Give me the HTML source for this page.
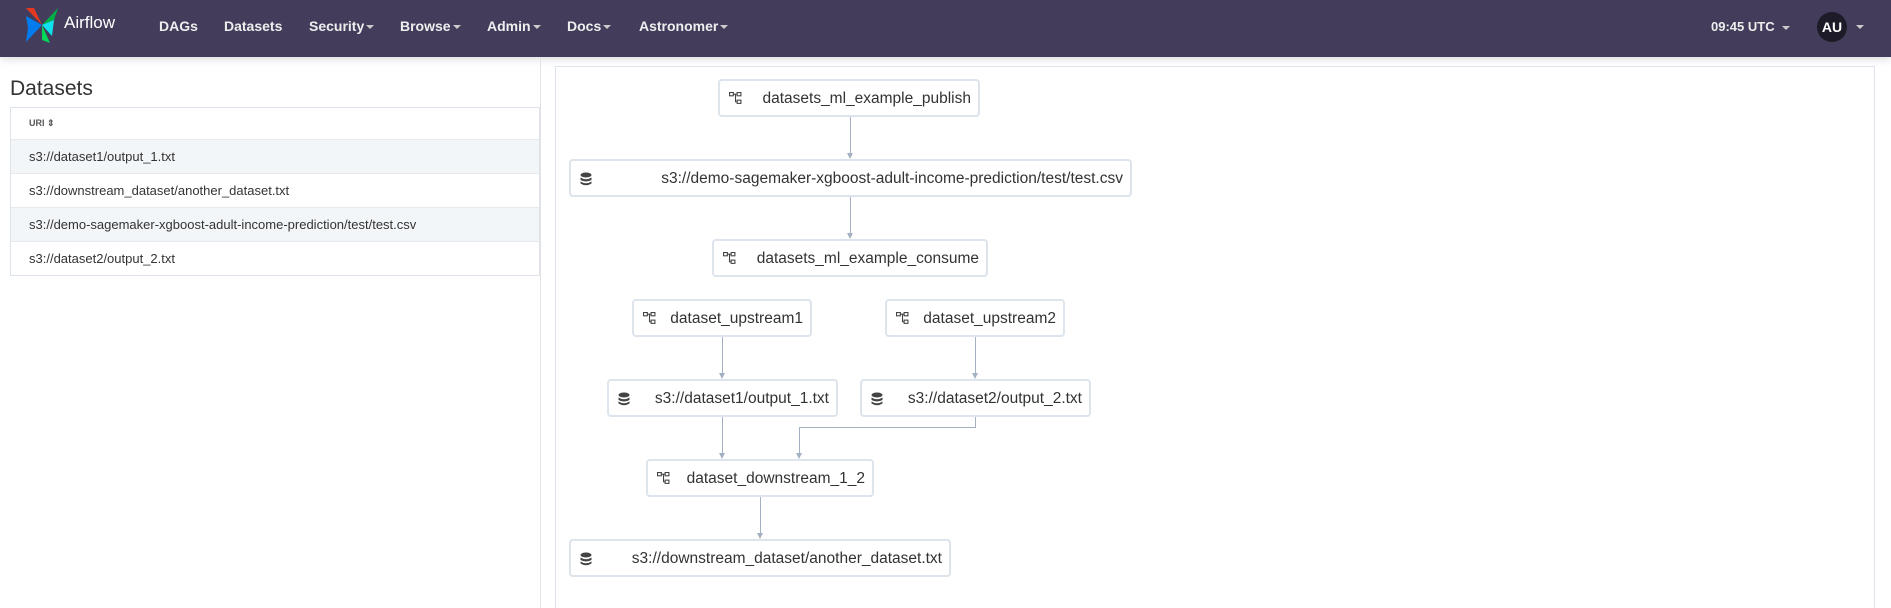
<!DOCTYPE html>
<html style="width:1891px;height:608px;overflow:hidden"><head><meta charset="utf-8"><style>
*{box-sizing:border-box;margin:0;padding:0}
body{width:1891px;height:608px;overflow:hidden;background:#fff;font-family:"Liberation Sans",Arial,sans-serif;color:#333;position:relative}
.nav{position:absolute;left:0;top:0;width:1891px;height:57px;background:#433d5b;box-shadow:0 2px 8px rgba(0,0,0,.15)}
.nav .it{position:absolute;top:18px;color:#eee;font-weight:bold;font-size:14px;white-space:nowrap}
.car{display:inline-block;width:0;height:0;border-left:4px solid transparent;border-right:4px solid transparent;border-top:4px solid #ccc;vertical-align:middle;margin-left:2px}
.brand{position:absolute;left:64px;top:13px;color:#fff;font-size:17px}
.au{position:absolute;left:1817px;top:12px;width:30px;height:30px;border-radius:50%;background:#1d1b27;color:#fff;font-weight:bold;font-size:14px;text-align:center;line-height:30px}
h2{position:absolute;left:10px;top:77px;font-size:21px;font-weight:normal;color:#333}
.tbl{position:absolute;left:10px;top:107px;width:530px;border:1px solid #dde3ea}
.tbl div{height:34px;line-height:34px;padding-left:18px;font-size:13px;border-top:1px solid #e6eaee;white-space:nowrap}
.tbl div.h{height:31px;line-height:31px;border-top:none;font-size:9px;font-weight:bold;color:#555}
.tbl div.s{background:#f3f6f9}
.vl{position:absolute;left:540px;top:57px;width:1px;height:551px;background:#e3e3e3}
.panel{position:absolute;left:555px;top:66px;width:1320px;height:560px;border:1px solid #dde3ea;border-bottom:none}
.n{position:absolute;height:38px;border:2px solid #dde4ec;border-radius:4px;background:#fff;font-size:15.5px;color:#333;line-height:35px;text-align:right;padding-right:7px;white-space:nowrap}
.n svg{position:absolute;left:9px;top:11px}
.e{position:absolute;background:#a3b1c2}
.ar{position:absolute;width:0;height:0;border-left:3px solid transparent;border-right:3px solid transparent;border-top:6px solid #a3b1c2}
</style></head><body>
<div class="nav">
<svg style="position:absolute;left:24px;top:6px" width="36" height="38" viewBox="0 0 36 38">
<path d="M18 19 L2 2 L10 2 Z" fill="#e43921"/><path d="M18 19 L34 2 L30 14 Z" fill="#00ad46"/><path d="M18 19 L2 36 L4 22 Z" fill="#017cee"/><path d="M18 19 L26 37 L18 34 Z" fill="#04d659"/><path d="M18 19 L4 22 L2 10 Z" fill="#017cee"/><path d="M18 19 L30 14 L28 30 Z" fill="#11e1ee"/>
</svg>
<div class="brand">Airflow</div>
<div class="it" style="left:159px">DAGs</div>
<div class="it" style="left:224px">Datasets</div>
<div class="it" style="left:309px">Security<span class="car"></span></div>
<div class="it" style="left:400px">Browse<span class="car"></span></div>
<div class="it" style="left:487px">Admin<span class="car"></span></div>
<div class="it" style="left:567px">Docs<span class="car"></span></div>
<div class="it" style="left:639px">Astronomer<span class="car"></span></div>
<div class="it" style="left:1711px;font-size:13px;top:19px">09:45 UTC <span class="car" style="margin-left:4px"></span></div>
<div class="au">AU</div>
<span class="car" style="position:absolute;left:1854px;top:25px"></span>
</div>
<h2>Datasets</h2>
<div class="tbl">
<div class="h">URI ⇕</div>
<div class="s">s3://dataset1/output_1.txt</div>
<div>s3://downstream_dataset/another_dataset.txt</div>
<div class="s">s3://demo-sagemaker-xgboost-adult-income-prediction/test/test.csv</div>
<div>s3://dataset2/output_2.txt</div>
</div>
<div class="vl"></div>
<div class="panel"></div>

<div class="e" style="left:850px;top:117px;width:1px;height:36px"></div><div class="ar" style="left:847px;top:153px"></div>
<div class="e" style="left:850px;top:197px;width:1px;height:36px"></div><div class="ar" style="left:847px;top:233px"></div>
<div class="e" style="left:722px;top:337px;width:1px;height:36px"></div><div class="ar" style="left:719px;top:373px"></div>
<div class="e" style="left:975px;top:337px;width:1px;height:36px"></div><div class="ar" style="left:972px;top:373px"></div>
<div class="e" style="left:722px;top:417px;width:1px;height:36px"></div><div class="ar" style="left:719px;top:453px"></div>
<div class="e" style="left:975px;top:417px;width:1px;height:11px"></div>
<div class="e" style="left:799px;top:427px;width:177px;height:1px"></div>
<div class="e" style="left:799px;top:427px;width:1px;height:26px"></div><div class="ar" style="left:796px;top:453px"></div>
<div class="e" style="left:760px;top:497px;width:1px;height:36px"></div><div class="ar" style="left:757px;top:533px"></div>

<svg width="0" height="0" style="position:absolute"><defs>
<symbol id="dag" viewBox="0 0 12 12"><g fill="none" stroke="#444" stroke-width="1"><rect x="0.5" y="0.5" width="3.5" height="3" /><rect x="7.5" y="0.5" width="3.5" height="3"/><rect x="7.5" y="7.5" width="3.5" height="3"/><path d="M4 2H7.5M6 2V9H7.5"/></g></symbol>
<symbol id="db" viewBox="0 0 12 14"><g fill="#444"><ellipse cx="6" cy="3" rx="5.5" ry="2.5"/><path d="M0.5 5.5Q6 9 11.5 5.5V8Q6 11 0.5 8Z"/><path d="M0.5 9.5Q6 13 11.5 9.5V11.5Q6 15 0.5 11.5Z"/></g></symbol>
</defs></svg>

<div class="n" style="left:718px;top:79px;width:262px"><svg width="13" height="13"><use href="#dag"/></svg>datasets_ml_example_publish</div>
<div class="n" style="left:569px;top:159px;width:563px"><svg width="12" height="14"><use href="#db"/></svg>s3://demo-sagemaker-xgboost-adult-income-prediction/test/test.csv</div>
<div class="n" style="left:712px;top:239px;width:276px"><svg width="13" height="13"><use href="#dag"/></svg>datasets_ml_example_consume</div>
<div class="n" style="left:632px;top:299px;width:180px"><svg width="13" height="13"><use href="#dag"/></svg>dataset_upstream1</div>
<div class="n" style="left:885px;top:299px;width:180px"><svg width="13" height="13"><use href="#dag"/></svg>dataset_upstream2</div>
<div class="n" style="left:607px;top:379px;width:231px"><svg width="12" height="14"><use href="#db"/></svg>s3://dataset1/output_1.txt</div>
<div class="n" style="left:860px;top:379px;width:231px"><svg width="12" height="14"><use href="#db"/></svg>s3://dataset2/output_2.txt</div>
<div class="n" style="left:646px;top:459px;width:228px"><svg width="13" height="13"><use href="#dag"/></svg>dataset_downstream_1_2</div>
<div class="n" style="left:569px;top:539px;width:382px"><svg width="12" height="14"><use href="#db"/></svg>s3://downstream_dataset/another_dataset.txt</div>
</body></html>
